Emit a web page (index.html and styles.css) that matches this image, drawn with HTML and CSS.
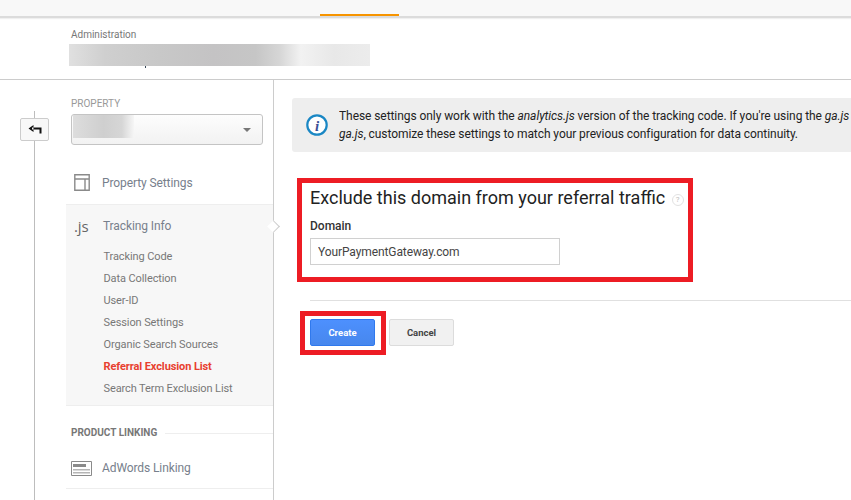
FILE: index.html
```html
<!DOCTYPE html>
<html lang="en">
<head>
<meta charset="utf-8">
<title>Administration</title>
<link rel="stylesheet" href="styles.css">
</head>
<body>
<div class="topbar"><div class="tab"></div></div>
<header class="head">
  <div class="crumb">Administration</div>
  <div class="blur-title"></div>
</header>
<div class="main">
  <div class="rail">
    <button class="back" aria-label="Back">
      <svg width="14" height="10" viewBox="0 0 14 10"><path d="M5.5 0 L0.5 3.5 L5.5 7 Z M4 2.5 H13.5 V4.5 H4 Z M11.5 3 H13.5 V8.5 H11.5 Z" fill="#111"/></svg>
    </button>
  </div>
  <aside class="side">
    <div class="prop-label">PROPERTY</div>
    <div class="select"><div class="select-blur"></div><span class="caret"></span></div>
    <div class="nav-row settings">
      <svg class="ico" width="16" height="17" viewBox="0 0 16 17"><path d="M0.8 0.8H15.2V16.2H0.8Z M0.8 5H15.2 M11 5V16.2" fill="none" stroke="#8a8a8a" stroke-width="1.4"/></svg>
      <span>Property Settings</span>
    </div>
    <div class="group">
      <div class="nav-row tracking"><span class="js">.js</span><span>Tracking Info</span></div>
      <ul class="sub">
        <li>Tracking Code</li>
        <li>Data Collection</li>
        <li>User-ID</li>
        <li>Session Settings</li>
        <li>Organic Search Sources</li>
        <li class="on">Referral Exclusion List</li>
        <li>Search Term Exclusion List</li>
      </ul>
      <span class="notch"></span>
    </div>
    <div class="section"><span>PRODUCT LINKING</span><i></i></div>
    <div class="nav-row ad">
      <svg class="ico" width="21" height="15" viewBox="0 0 21 15"><path d="M0.5 0.5H20.5V14.5H0.5Z" fill="#fff" stroke="#8a8a8a"/><path d="M2 3H15V6H2Z" fill="#8a8a8a"/><path d="M2 8H19V9.5H2Z M2 11H19V12.5H2Z" fill="#b5b5b5"/></svg>
      <span>AdWords Linking</span>
    </div>
  </aside>
  <main class="content">
    <div class="notice">
      <svg class="info" width="22" height="22" viewBox="0 0 22 22"><circle cx="11" cy="11" r="9.7" fill="#fff" stroke="#1a87c4" stroke-width="2.2"/><text x="11" y="16.5" text-anchor="middle" class="info-i">i</text></svg>
      <p>These settings only work with the <em>analytics.js</em> version of the tracking code. If you're using the <em>ga.js</em><br><em>ga.js</em>, customize these settings to match your previous configuration for data continuity.</p>
    </div>
    <form class="form">
      <h2>Exclude this domain from your referral traffic <span class="help">?</span></h2>
      <label class="lbl" for="domain">Domain</label>
      <input class="field" id="domain" value="YourPaymentGateway.com">
      <hr class="rule">
      <div class="actions">
        <button type="button" class="btn primary">Create</button>
        <button type="button" class="btn">Cancel</button>
      </div>
    </form>
  </main>
</div>
<div class="mark mark-form"></div>
<div class="mark mark-btn"></div>
</body>
</html>
```

FILE: styles.css
```css
* { box-sizing: border-box; }
html, body { height: 100%; }
body {
  margin: 0;
  background: #fff;
  color: #222;
  font-family: Roboto, "Liberation Sans", sans-serif;
  overflow: hidden;
  position: relative;
}
.topbar {
  height: 18px;
  padding: 14px 0 0 320px;
  background: #f8f8f8;
  border-bottom: 2px solid #dcdcdc;
  box-shadow: 0 1px 1px #f0f0f0;
}
.tab { width: 79px; height: 2px; background: #f79400; }
.head {
  height: 62px;
  padding: 11px 0 0 71px;
  border-bottom: 1px solid #ccc;
}
.crumb { font-size: 10px; line-height: 12px; color: #777; }
.blur-title {
  position: relative;
  width: 301px;
  height: 22px;
  margin: 3px 0 0 -2px;
  background: linear-gradient(90deg, #e0e0e0 0, #cfcfcf 12%, #c8c8c8 30%, #c4c3c4 48%, #c6c6c6 62%, #d6d6d6 70%, #f2f2f2 77%, #e8e8e8 88%, #ececec 100%);
}
.blur-title::after {
  content: "";
  position: absolute;
  left: 76px;
  top: 22px;
  width: 1px;
  height: 2px;
  background: #345;
}
.main { display: flex; height: 420px; }
.rail {
  width: 66px;
  flex: none;
  padding: 38px 0 0 20px;
  background: linear-gradient(#bdbdbd, #bdbdbd) 34px 31px / 1px 100% no-repeat;
}
.back {
  display: flex;
  align-items: center;
  justify-content: center;
  width: 29px;
  height: 23px;
  padding: 0;
  background: #f8f8f8;
  border: 1px solid #ccc;
  border-radius: 2px;
}
.side {
  width: 208px;
  flex: none;
  border-right: 1px solid #ccc;
}
.prop-label { font-size: 10px; line-height: 12px; color: #999; margin: 18px 0 4px 5px; }
.select {
  display: flex;
  align-items: center;
  justify-content: space-between;
  width: 192px;
  height: 31px;
  margin-left: 5px;
  padding: 0 11px 0 1px;
  border: 1px solid #c4c4c4;
  border-radius: 3px;
  background: linear-gradient(#fdfdfd, #f2f2f2);
}
.select-blur { width: 61px; height: 23px; margin-top: -7px; background: linear-gradient(90deg, #ddd 0, #cfcfcf 50%, #d6d6d6 80%, #f6f6f6 100%); }
.caret { width: 0; height: 0; border: 4px solid transparent; border-top: 4px solid #777; border-bottom: 0; }
.nav-row {
  display: flex;
  align-items: center;
  height: 59px;
  padding-left: 8px;
  font-size: 12px;
  letter-spacing: -0.1px;
  color: #77808c;
}
.settings { padding-top: 16px; }
.nav-row .ico { flex: none; margin-right: 12px; }
.group {
  position: relative;
  height: 202px;
  background: #f7f7f7;
  border-top: 1px solid #eee;
  border-bottom: 1px solid #eee;
}
.tracking { height: 41px; }
.js { width: 29px; font-family: "Open Sans", sans-serif; font-size: 15px; color: #666; }
.sub { list-style: none; margin: 0; padding: 0 0 0 37.5px; }
.sub li { height: 22px; line-height: 22px; font-size: 11px; letter-spacing: -0.1px; color: #777; }
.sub .on { color: #e8402f; font-weight: 700; }
.notch {
  position: absolute;
  right: -5px;
  top: 17px;
  width: 9px;
  height: 9px;
  background: #fff;
  border-top: 1px solid #ccc;
  border-right: 1px solid #ccc;
  transform: rotate(45deg);
}
.section { display: flex; align-items: center; gap: 8px; margin: 21px 0 0 5px; font-size: 10px; line-height: 12px; font-weight: 700; color: #777; }
.section i { flex: 1; height: 1px; background: #eee; }
.ad { height: 50px; padding-left: 5px; padding-top: 9px; border-bottom: 1px solid #eee; }
.ad .ico { margin-right: 10px; }
.content { flex: 1; min-width: 0; padding: 18px 0 0 18px; }
.notice {
  display: flex;
  align-items: center;
  height: 54px;
  padding-left: 14px;
  background: #eee;
  border-radius: 3px 0 0 3px;
}
.info { flex: none; margin-right: 11px; }
.info-i { font: italic 700 15px "Liberation Serif", serif; fill: #3a4f96; }
.notice p { margin: 0; min-width: 0; font-size: 12px; letter-spacing: -0.07px; line-height: 18px; color: #222; white-space: nowrap; overflow: hidden; }
.form { padding: 0 0 0 18px; }
.form h2 { margin: 35px 0 0; font-size: 18px; line-height: 22px; font-weight: 400; color: #222; white-space: nowrap; }
.help {
  display: inline-flex;
  align-items: center;
  justify-content: center;
  width: 12px;
  height: 12px;
  margin-left: 2px;
  border: 1px solid #e2e2e2;
  border-radius: 50%;
  font-size: 8px;
  color: #bbb;
  vertical-align: 2px;
}
.lbl { display: block; margin-top: 9px; font-size: 12px; line-height: 16px; font-weight: 500; color: #333; }
.field {
  display: block;
  width: 250px;
  height: 27px;
  margin-top: 4px;
  padding: 0 7px;
  border: 1px solid #d0d0d0;
  background: #fff;
  font: 12px Roboto, sans-serif;
  letter-spacing: -0.1px;
  color: #444;
}
.rule { height: 1px; margin: 35px 0 0; border: 0; background: #e0e0e0; }
.actions { display: flex; gap: 14px; margin-top: 18px; }
.btn {
  width: 65px;
  height: 27px;
  padding: 0;
  border: 1px solid #dcdcdc;
  border-radius: 2px;
  background: #f1f1f1;
  font: 700 9.5px Roboto, sans-serif;
  color: #444;
}
.primary { background: linear-gradient(#4d90fe, #4787ed); border-color: #3079ed; color: #fff; }
.mark { position: absolute; border: 5px solid #ed1c24; pointer-events: none; }
.mark-form { left: 297px; top: 178px; width: 396px; height: 104px; }
.mark-btn { left: 300px; top: 311px; width: 86px; height: 44px; }
```
